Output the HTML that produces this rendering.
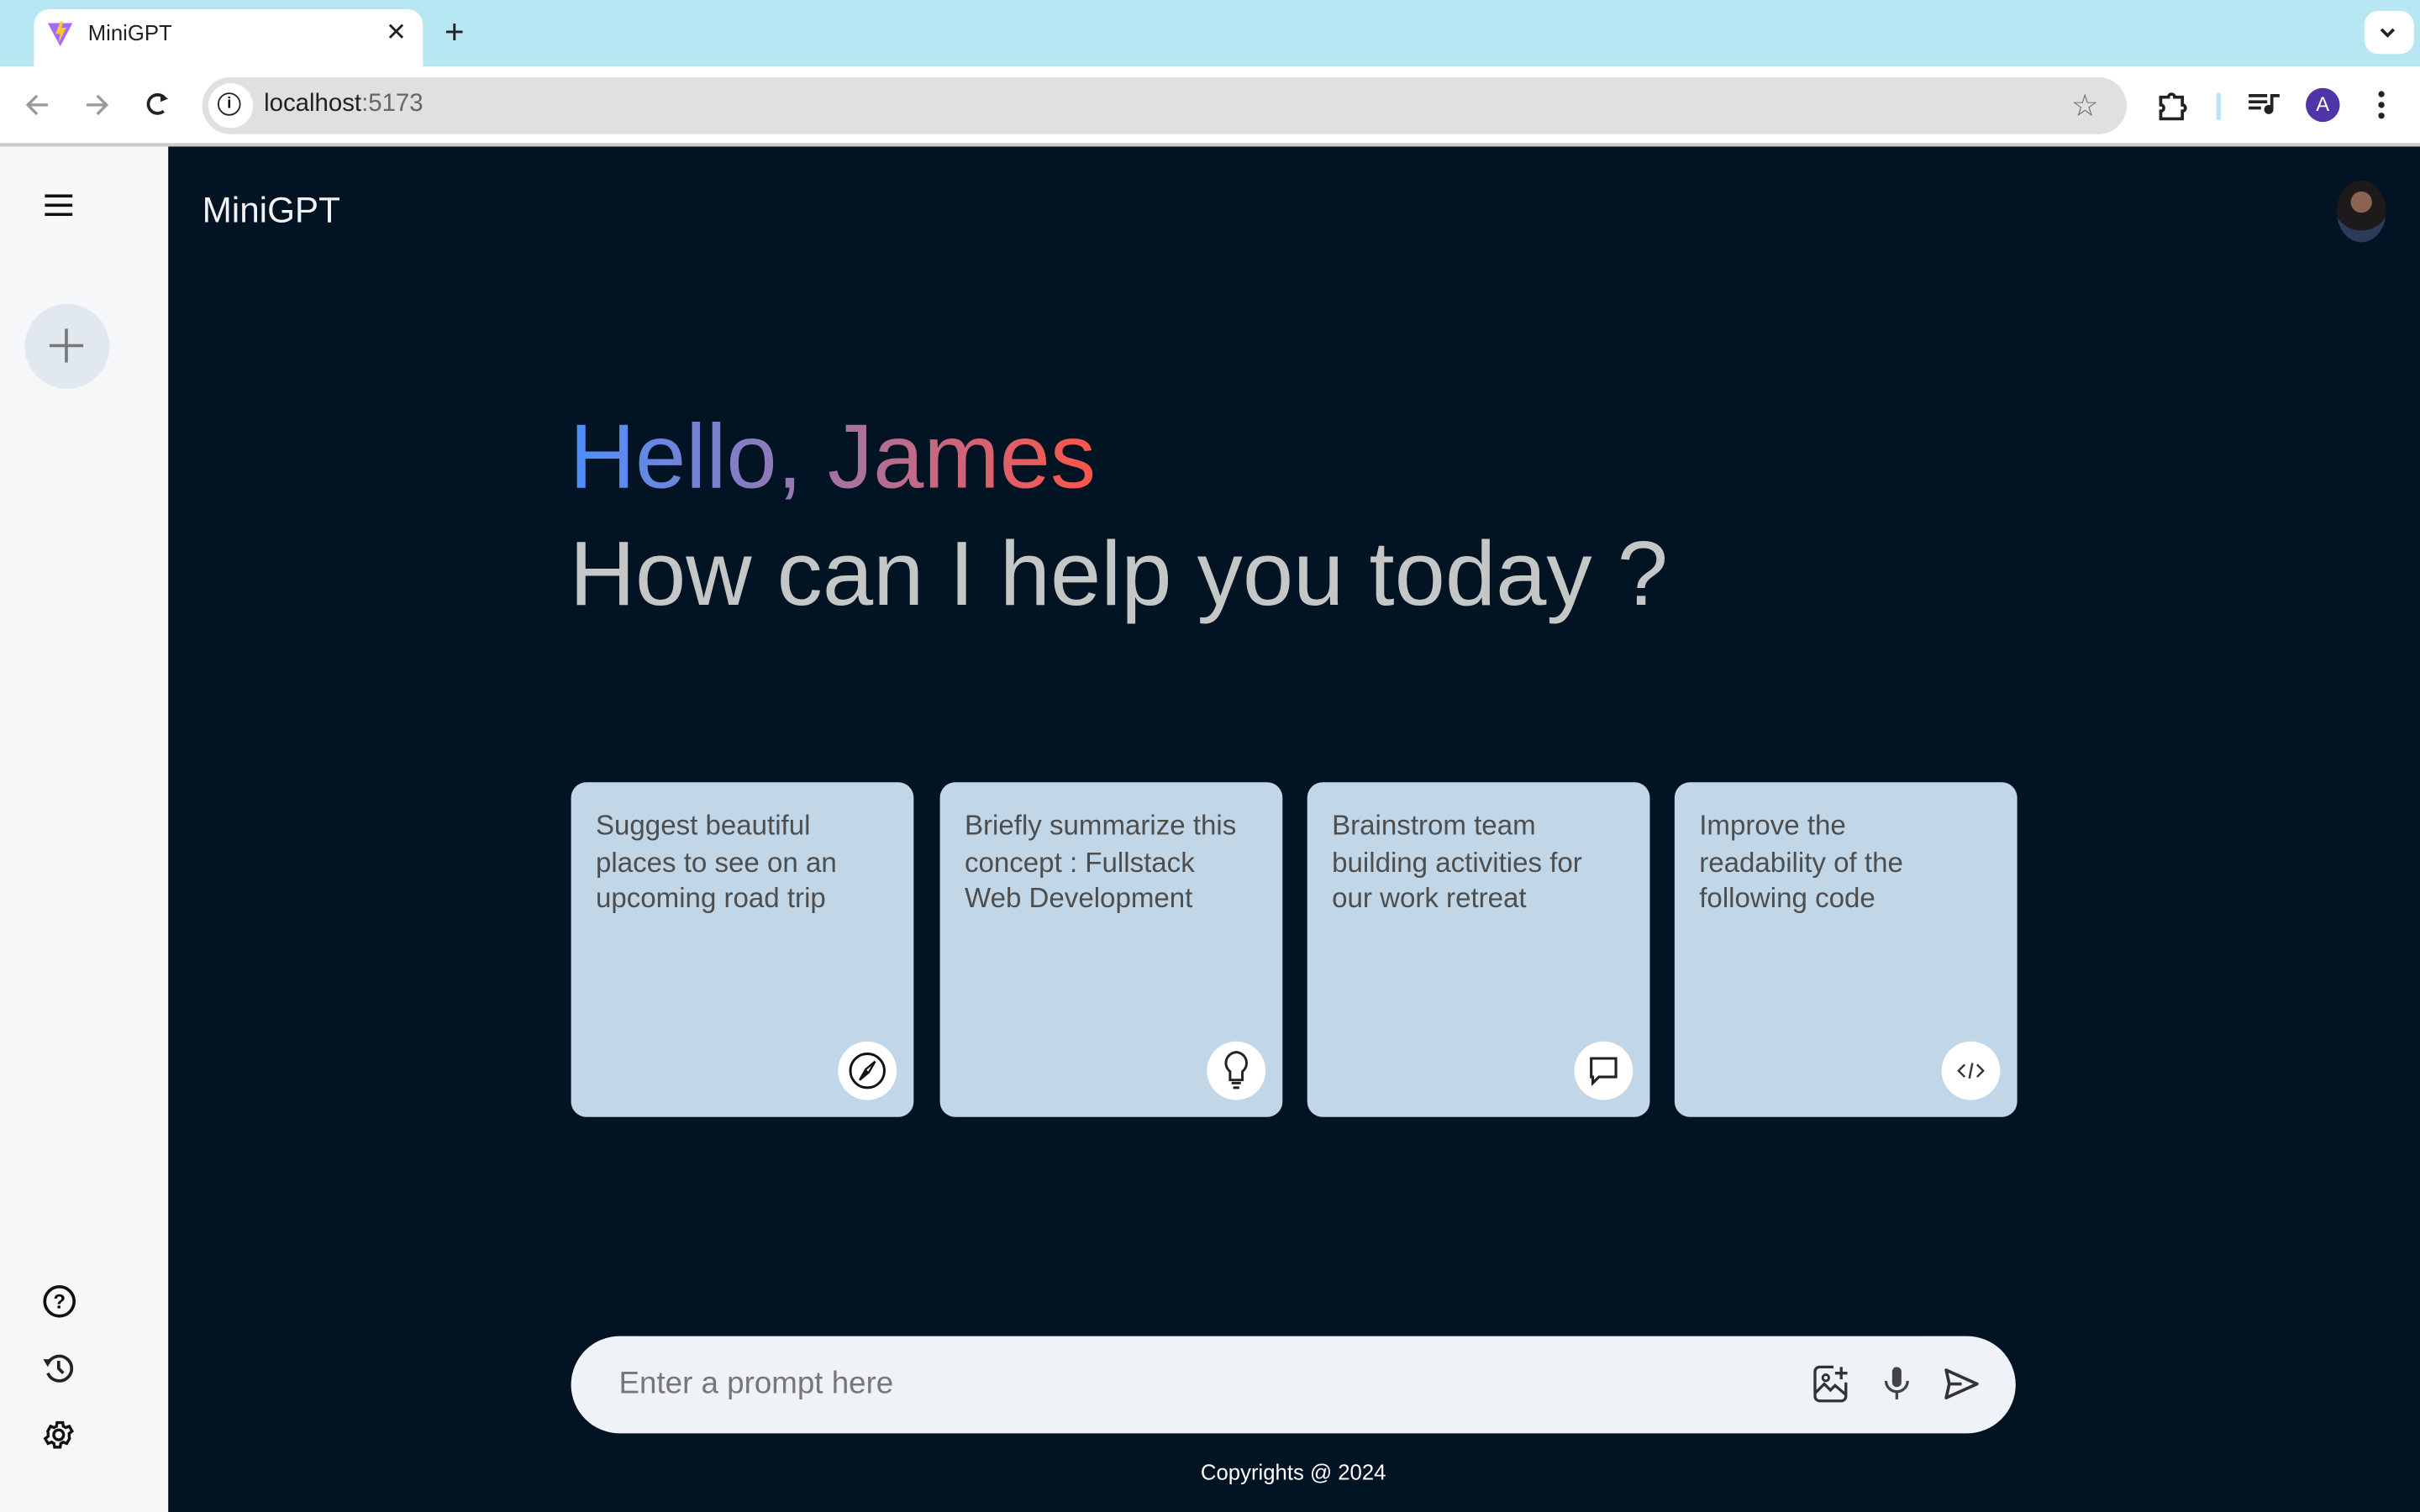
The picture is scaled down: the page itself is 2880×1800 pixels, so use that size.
<!DOCTYPE html>
<html><head><meta charset="utf-8"><style>
html,body{margin:0;padding:0;width:2880px;height:1800px;overflow:hidden;background:#021324;}
#w{position:absolute;left:0;top:0;width:1568px;height:980px;transform:scale(1.836735);transform-origin:0 0;font-family:"Liberation Sans",sans-serif;}
.a{position:absolute}
.card{position:absolute;top:507px;width:222px;height:217px;background:#c1d6e7;border-radius:10px;}
.card p{margin:0;position:absolute;left:16px;top:17px;width:182px;font-size:18px;line-height:23.5px;color:#4e4e4e;}
.ic{position:absolute;right:11px;bottom:11px;width:38px;height:38px;border-radius:50%;background:#fff;display:flex;align-items:center;justify-content:center}
</style></head><body><div id="w">
<div class="a" style="left:0;top:0;width:1568px;height:43px;background:#b6e7f2"></div>
<div class="a" style="left:22px;top:6px;width:252px;height:40px;background:#fff;border-radius:10px 10px 0 0"></div>
<svg class="a" style="left:30px;top:13px" width="18" height="18" viewBox="0 0 18 18"><path d="M1 2 L9 17 L17 2 Z" fill="#9f6cff"/><path d="M9 1 L6 9 H9 L8 15 L13 5 H10 L11 1Z" fill="#ffc62a"/></svg>
<div class="a" style="left:57px;top:13px;font-size:14px;color:#222">MiniGPT</div>
<div class="a" style="left:250px;top:11px;font-size:16px;color:#222">✕</div>
<div class="a" style="left:288px;top:8px;font-size:22px;color:#222">+</div>
<div class="a" style="left:1532px;top:7px;width:32px;height:28px;background:#fff;border-radius:9px"></div>
<svg class="a" style="left:1540px;top:14px" width="14" height="14"><path d="M3 5 L7 9 L11 5" stroke="#222" stroke-width="2" fill="none"/></svg>
<div class="a" style="left:0;top:43px;width:1568px;height:50px;background:#fff"></div>
<div class="a" style="left:0;top:93px;width:1568px;height:2px;background:#ccc"></div>
<svg class="a" style="left:14px;top:58px" width="100" height="20"><g stroke="#999" stroke-width="1.8" fill="none"><path d="M17 10H4M10 4L4 10L10 16"/><path d="M42 10H55M49 4L55 10L49 16"/></g><path d="M95 6 A6 6 0 1 0 94 14" stroke="#222" stroke-width="2" fill="none" transform="translate(-2,0)"/><path d="M90 3 L95 6 L90 8" fill="#222"/></svg>
<div class="a" style="left:131px;top:50px;width:1247px;height:37px;background:#e0e0e0;border-radius:19px"></div>
<div class="a" style="left:135px;top:54px;width:29px;height:29px;background:#fff;border-radius:50%"></div>
<div class="a" style="left:141px;top:60px;width:13px;height:13px;border:1.8px solid #222;border-radius:50%;font-size:10px;text-align:center;line-height:13px;font-weight:bold">i</div>
<div class="a" style="left:171px;top:59px;font-size:16px;color:#222">localhost<span style="color:#666">:5173</span></div>
<div class="a" style="left:1342px;top:56px;font-size:20px;color:#666">☆</div>
<svg class="a" style="left:1397px;top:58px" width="22" height="22" viewBox="0 0 22 22"><path d="M3 5h5a2 2 0 0 1 4 0h5v5a2 2 0 0 1 0 4v5H3v-5a2 2 0 0 0 0-4z" stroke="#222" stroke-width="2" fill="none"/></svg>
<div class="a" style="left:1436px;top:60px;width:3px;height:18px;background:#b6e7f2;border-radius:2px"></div>
<svg class="a" style="left:1456px;top:59px" width="22" height="20"><g stroke="#222" stroke-width="2"><path d="M1 3h12M1 7h12M1 11h8M16 2v10M16 3h5"/></g><circle cx="14" cy="12" r="3" fill="#222"/></svg>
<div class="a" style="left:1494px;top:57px;width:22px;height:22px;background:#4f35a6;border-radius:50%;color:#fff;font-size:13px;text-align:center;line-height:22px">A</div>
<div class="a" style="left:1541px;top:59px;width:4px;font-size:0"><div style="width:4px;height:4px;border-radius:2px;background:#222;margin-bottom:3px"></div><div style="width:4px;height:4px;border-radius:2px;background:#222;margin-bottom:3px"></div><div style="width:4px;height:4px;border-radius:2px;background:#222"></div></div>

<div class="a" style="left:0;top:95px;width:109px;height:885px;background:#f5f7f9"></div>
<svg class="a" style="left:29px;top:126px" width="18" height="14"><g stroke="#111" stroke-width="2"><path d="M0 1h18M0 7h18M0 13h18"/></g></svg>
<div class="a" style="left:16px;top:197px;width:55px;height:55px;border-radius:50%;background:#e2e8f0"></div>
<svg class="a" style="left:32px;top:213px" width="22" height="22"><g stroke="#777" stroke-width="2"><path d="M11 0v22M0 11h22"/></g></svg>
<div class="a" style="left:28px;top:833px;width:17px;height:17px;border:2px solid #111;border-radius:50%;font-size:13px;font-weight:bold;text-align:center;line-height:17px">?</div>
<svg class="a" style="left:27px;top:876px" width="22" height="22" viewBox="0 0 22 22"><path d="M4 8 A8 8 0 1 1 4 14" stroke="#222" stroke-width="2" fill="none"/><path d="M1 5 L6 5 L4 10Z" fill="#222"/><path d="M11 6v5l3 3" stroke="#222" stroke-width="2" fill="none"/></svg>
<svg class="a" style="left:27px;top:919px" width="22" height="22" viewBox="0 0 24 24"><path d="M12 15.5A3.5 3.5 0 1 1 12 8.5a3.5 3.5 0 0 1 0 7zM19.4 13a7.6 7.6 0 0 0 0-2l2.1-1.6-2-3.5-2.5 1a7.4 7.4 0 0 0-1.7-1l-.4-2.6h-4l-.4 2.6a7.4 7.4 0 0 0-1.7 1l-2.5-1-2 3.5L4.6 11a7.6 7.6 0 0 0 0 2l-2.1 1.6 2 3.5 2.5-1c.5.4 1.1.7 1.7 1l.4 2.6h4l.4-2.6c.6-.3 1.2-.6 1.7-1l2.5 1 2-3.5z" stroke="#111" stroke-width="2" fill="none"/></svg>

<div class="a" style="left:131px;top:123px;font-size:23px;color:#f2f2f2">MiniGPT</div>
<div class="a" style="left:1514px;top:117px;width:32px;height:40px;border-radius:50%;background:radial-gradient(circle at 50% 35%,#8a6450 0 22%,#1c1a1a 23% 60%,#2d3b5a 61%)"></div>

<div class="a" style="left:369px;top:262px;font-size:59px;line-height:68px;background:linear-gradient(90deg,#4b90ff,#ff5546);-webkit-background-clip:text;background-clip:text;color:transparent;width:345px;white-space:nowrap">Hello, James</div>
<div class="a" style="left:369px;top:338px;font-size:59px;line-height:68px;color:#c4c7c5;white-space:nowrap">How can I help you today ?</div>

<div class="card" style="left:370px"><p>Suggest beautiful places to see on an upcoming road trip</p><div class="ic"><svg width="26" height="26" viewBox="0 0 26 26"><circle cx="13" cy="13" r="11" stroke="#111" stroke-width="1.6" fill="none"/><path d="M18 7 L14 14 L8 19 L12 12Z" stroke="#111" stroke-width="1.3" fill="none"/><path d="M14 14 L8 19 L12 12Z" fill="#111"/></svg></div></div>
<div class="card" style="left:609px"><p>Briefly summarize this concept : Fullstack Web Development</p><div class="ic"><svg width="22" height="28" viewBox="0 0 22 28"><path d="M11 2a7 7 0 0 0-4 12.5V20h8v-5.5A7 7 0 0 0 11 2z" stroke="#222" stroke-width="1.6" fill="none"/><path d="M8 22h6M9 25h4" stroke="#222" stroke-width="1.6"/></svg></div></div>
<div class="card" style="left:847px"><p>Brainstrom team building activities for our work retreat</p><div class="ic"><svg width="22" height="22" viewBox="0 0 22 22"><path d="M3 3h16v12H8l-4 4v-4H3z" stroke="#222" stroke-width="1.7" fill="none"/></svg></div></div>
<div class="card" style="left:1085px"><p>Improve the readability of the following code</p><div class="ic"><svg width="20" height="16" viewBox="0 0 20 16"><path d="M6 4 L2 8 L6 12M14 4 L18 8 L14 12M11 3 L9 13" stroke="#333" stroke-width="1.3" fill="none"/></svg></div></div>

<div class="a" style="left:370px;top:866px;width:936px;height:63px;background:#eff3f8;border-radius:32px"></div>
<div class="a" style="left:401px;top:886px;font-size:20px;color:#777">Enter a prompt here</div>
<svg class="a" style="left:1173px;top:884px" width="26" height="26" viewBox="0 0 26 26"><path d="M15 2H6a3 3 0 0 0-3 3v16a3 3 0 0 0 3 3h14a3 3 0 0 0 3-3v-9" stroke="#333" stroke-width="1.8" fill="none"/><path d="M20 2v8M16 6h8" stroke="#333" stroke-width="1.8"/><circle cx="10" cy="9" r="2" stroke="#333" stroke-width="1.6" fill="none"/><path d="M3 19l6-6 4 4 3-3 7 6" stroke="#333" stroke-width="1.8" fill="none"/></svg>
<svg class="a" style="left:1219px;top:885px" width="20" height="24" viewBox="0 0 20 24"><rect x="7" y="1" width="6" height="13" rx="3" fill="#444"/><path d="M3 10a7 7 0 0 0 14 0M10 17v5" stroke="#444" stroke-width="1.8" fill="none"/></svg>
<svg class="a" style="left:1259px;top:886px" width="24" height="22" viewBox="0 0 24 22"><path d="M2 2 L22 11 L2 20 L4 11Z M4 11H12" stroke="#333" stroke-width="2" fill="none" stroke-linejoin="round"/></svg>
<div class="a" style="left:0;width:1676px;top:946px;text-align:center;font-size:14px;color:#fff">Copyrights @ 2024</div>
</div></body></html>
